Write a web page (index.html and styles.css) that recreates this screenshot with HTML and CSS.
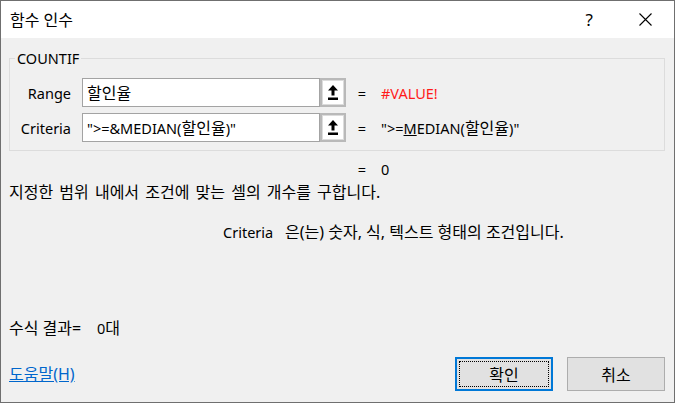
FILE: index.html
```html
<!DOCTYPE html>
<html lang="ko">
<head>
<meta charset="utf-8">
<title>함수 인수</title>
<link rel="stylesheet" href="styles.css">
</head>
<body>
<div class="window">
  <div class="titlebar">
    <span class="title ko">함수 인수</span>
    <span class="help">?</span>
    <span class="close">
      <svg width="13" height="13" viewBox="0 0 13 13"><path d="M0.5 0.5 L12.5 12.5 M12.5 0.5 L0.5 12.5" stroke="#000" stroke-width="1.1" fill="none"/></svg>
    </span>
  </div>
  <div class="content">
    <fieldset class="group">
      <legend>COUNTIF</legend>
      <div class="arg-row">
        <span class="arg-label">Range</span>
        <div class="arg-input"><span class="ko">할인율</span></div>
        <span class="ref-btn">
          <svg width="10" height="15" viewBox="0 0 10 15"><polygon points="5,0 10,5.5 6.5,5.5 6.5,10.5 3.5,10.5 3.5,5.5 0,5.5" fill="#000"/><rect x="0" y="12.5" width="10" height="2.5" fill="#000"/></svg>
        </span>
        <span class="eq">=</span>
        <span class="val error">#VALUE!</span>
      </div>
      <div class="arg-row">
        <span class="arg-label">Criteria</span>
        <div class="arg-input">"&gt;=&amp;MEDIAN(<span class="ko">할인율</span>)"</div>
        <span class="ref-btn">
          <svg width="10" height="15" viewBox="0 0 10 15"><polygon points="5,0 10,5.5 6.5,5.5 6.5,10.5 3.5,10.5 3.5,5.5 0,5.5" fill="#000"/><rect x="0" y="12.5" width="10" height="2.5" fill="#000"/></svg>
        </span>
        <span class="eq">=</span>
        <span class="val">"&gt;=<u>M</u>EDIAN(<span class="ko">할인율</span>)"</span>
      </div>
    </fieldset>
    <div class="result-line"><span class="eq">=</span><span class="val">0</span></div>
    <p class="desc ko">지정한 범위 내에서 조건에 맞는 셀의 개수를 구합니다.</p>
    <p class="arg-desc"><span class="arg-name">Criteria</span><span class="ko">은(는) 숫자, 식, 텍스트 형태의 조건입니다.</span></p>
    <div class="formula-result"><span class="fr-label ko">수식 결과=</span><span>0</span><span class="ko">대</span></div>
    <div class="footer">
      <a class="help-link ko" href="#">도움말(H)</a>
      <div class="buttons">
        <button class="btn primary ko" type="button">확인</button>
        <button class="btn ko" type="button">취소</button>
      </div>
    </div>
  </div>
</div>
</body>
</html>
```
FILE: styles.css
```css
html, body {
  margin: 0;
  padding: 0;
}
body {
  background: #ffffff;
  font-family: "Noto Sans", "Noto Sans CJK KR", sans-serif;
  font-size: 14.5px;
  color: #000;
}
.ko {
  font-size: 16px;
}
.window {
  width: 675px;
  height: 403px;
  box-sizing: border-box;
  border: 1px solid #6f6f6f;
  background: #f0f0f0;
  display: flex;
  flex-direction: column;
}
.titlebar {
  height: 37px;
  background: #ffffff;
  display: flex;
  align-items: center;
  padding-left: 9px;
  flex: none;
}
.title {
  flex: 1;
  line-height: 20px;
}
.help {
  font-size: 17px;
  line-height: 20px;
  margin-right: 46px;
}
.close {
  display: flex;
  margin-right: 22px;
}
.content {
  flex: 1;
  display: flex;
  flex-direction: column;
  padding: 0 9px 0 8px;
}
.group {
  margin: 12px 0 0 0;
  padding: 12px 0 8px 0;
  border: 1px solid #dcdcdc;
  min-width: 0;
}
.group legend {
  margin-left: 5px;
  padding: 0 2px;
  line-height: 16px;
}
.arg-row {
  display: flex;
  align-items: center;
  height: 29px;
  line-height: 20px;
}
.arg-row + .arg-row {
  margin-top: 6px;
}
.arg-label {
  width: 61px;
  margin-right: 11px;
  text-align: right;
}
.arg-input {
  width: 238px;
  height: 29px;
  box-sizing: border-box;
  border: 1px solid #a3a3a3;
  background: #fff;
  padding-left: 4px;
  display: flex;
  align-items: center;
  white-space: pre;
}
.ref-btn {
  width: 26px;
  height: 29px;
  box-sizing: border-box;
  border: 2px solid #b9b9b9;
  box-shadow: inset 0 0 0 1px #dcdcdc;
  background: #fff;
  display: flex;
  align-items: center;
  justify-content: center;
}
.eq {
  margin-left: 6px;
  width: 20px;
  text-align: center;
}
.val {
  margin-left: 9px;
}
.val.error {
  color: #ff1a1a;
}
.result-line {
  margin-top: 8px;
  height: 20px;
  line-height: 20px;
  display: flex;
  padding-left: 337px;
}
.desc {
  margin: 3px 0 0 0;
  line-height: 20px;
  word-spacing: 2px;
}
.arg-desc {
  margin: 20px 0 0 0;
  padding-left: 214px;
  line-height: 20px;
}
.arg-name {
  display: inline-block;
  width: 62px;
}
.formula-result {
  margin-top: 76px;
  line-height: 20px;
  height: 20px;
}
.fr-label {
  display: inline-block;
  width: 88px;
}
.footer {
  margin-top: 19px;
  height: 34px;
  display: flex;
  align-items: center;
  justify-content: space-between;
}
.help-link {
  color: #0066cc;
  text-decoration: underline;
  line-height: 20px;
}
.buttons {
  display: flex;
  gap: 14px;
}
.btn {
  width: 98px;
  height: 34px;
  box-sizing: border-box;
  border: 1px solid #adadad;
  background: #e1e1e1;
  font-family: inherit;
  color: #000;
  padding: 0;
  position: relative;
}
.btn.primary {
  border: 2px solid #0078d7;
}
.btn.primary::after {
  content: "";
  position: absolute;
  inset: 2px;
  border: 1px dotted #000;
}
```
